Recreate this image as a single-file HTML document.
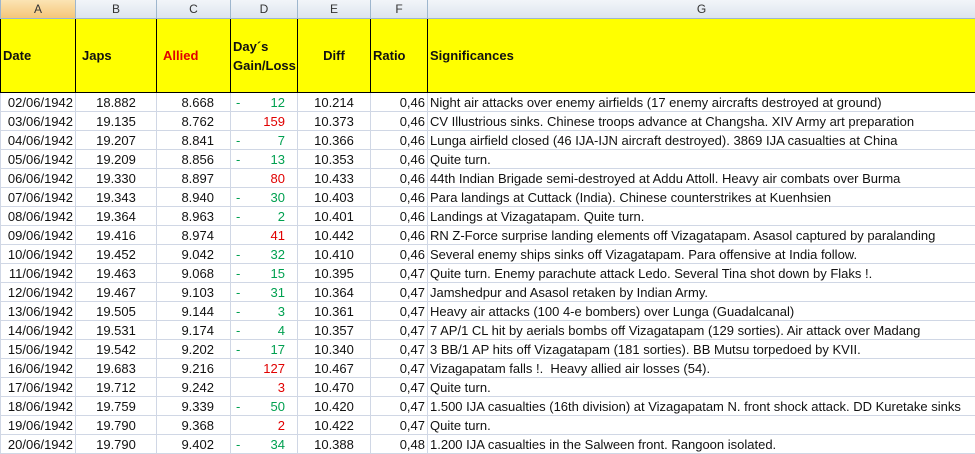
<!DOCTYPE html>
<html><head><style>
body{margin:0;width:975px;height:451px;overflow:hidden;background:#fff;font-family:"Liberation Sans",sans-serif;}
table{border-collapse:collapse;table-layout:fixed;position:absolute;left:0;top:0;width:975px;}
td{padding:0 2px;white-space:nowrap;overflow:hidden;font-size:13px;color:#111;}
tr.h td{height:18px;background:linear-gradient(#f2f5f9,#dde4ee);border:1px solid #9eb6ce;border-top:none;text-align:center;font-size:12px;color:#333;padding:0;}
tr.h td.sel{background:linear-gradient(#fbe4b4,#f5c67a);}
tr.y td{height:73px;background:#ffff00;border:1px solid #000;font-weight:bold;font-size:13px;}
tr.d td{height:17px;border:1px solid #d0d7e5;padding-top:1px;}
.r{text-align:right}.c{text-align:center}
.g{color:#00a050}.rd{color:#e00000}
.dl{float:left;color:#00a050;padding-left:3px}
</style></head><body>
<table>
<colgroup><col style="width:75px"><col style="width:81px"><col style="width:74px"><col style="width:67px"><col style="width:73px"><col style="width:57px"><col style="width:548px"></colgroup>
<tr class="h"><td class="sel">A</td><td>B</td><td>C</td><td>D</td><td>E</td><td>F</td><td>G</td></tr>
<tr class="y"><td>Date</td><td style="padding-left:6px">Japs</td><td style="padding-left:6px;color:#e00000">Allied</td><td style="padding-left:2px;line-height:19px">Day´s<br>Gain/Loss</td><td class="c">Diff</td><td>Ratio</td><td>Significances</td></tr>
<tr class="d"><td class="r">02/06/1942</td><td class="c">18.882</td><td class="r" style="padding-right:16px">8.668</td><td class="r" style="padding-right:12px"><span class="dl">-</span><span class="g">12</span></td><td class="c">10.214</td><td class="r">0,46</td><td>Night air attacks over enemy airfields (17 enemy aircrafts destroyed at ground)</td></tr>
<tr class="d"><td class="r">03/06/1942</td><td class="c">19.135</td><td class="r" style="padding-right:16px">8.762</td><td class="r" style="padding-right:12px"><span class="rd">159</span></td><td class="c">10.373</td><td class="r">0,46</td><td>CV Illustrious sinks. Chinese troops advance at Changsha. XIV Army art preparation</td></tr>
<tr class="d"><td class="r">04/06/1942</td><td class="c">19.207</td><td class="r" style="padding-right:16px">8.841</td><td class="r" style="padding-right:12px"><span class="dl">-</span><span class="g">7</span></td><td class="c">10.366</td><td class="r">0,46</td><td>Lunga airfield closed (46 IJA-IJN aircraft destroyed). 3869 IJA casualties at China</td></tr>
<tr class="d"><td class="r">05/06/1942</td><td class="c">19.209</td><td class="r" style="padding-right:16px">8.856</td><td class="r" style="padding-right:12px"><span class="dl">-</span><span class="g">13</span></td><td class="c">10.353</td><td class="r">0,46</td><td>Quite turn.</td></tr>
<tr class="d"><td class="r">06/06/1942</td><td class="c">19.330</td><td class="r" style="padding-right:16px">8.897</td><td class="r" style="padding-right:12px"><span class="rd">80</span></td><td class="c">10.433</td><td class="r">0,46</td><td>44th Indian Brigade semi-destroyed at Addu Attoll. Heavy air combats over Burma</td></tr>
<tr class="d"><td class="r">07/06/1942</td><td class="c">19.343</td><td class="r" style="padding-right:16px">8.940</td><td class="r" style="padding-right:12px"><span class="dl">-</span><span class="g">30</span></td><td class="c">10.403</td><td class="r">0,46</td><td>Para landings at Cuttack (India). Chinese counterstrikes at Kuenhsien</td></tr>
<tr class="d"><td class="r">08/06/1942</td><td class="c">19.364</td><td class="r" style="padding-right:16px">8.963</td><td class="r" style="padding-right:12px"><span class="dl">-</span><span class="g">2</span></td><td class="c">10.401</td><td class="r">0,46</td><td>Landings at Vizagatapam. Quite turn.</td></tr>
<tr class="d"><td class="r">09/06/1942</td><td class="c">19.416</td><td class="r" style="padding-right:16px">8.974</td><td class="r" style="padding-right:12px"><span class="rd">41</span></td><td class="c">10.442</td><td class="r">0,46</td><td>RN Z-Force surprise landing elements off Vizagatapam. Asasol captured by paralanding</td></tr>
<tr class="d"><td class="r">10/06/1942</td><td class="c">19.452</td><td class="r" style="padding-right:16px">9.042</td><td class="r" style="padding-right:12px"><span class="dl">-</span><span class="g">32</span></td><td class="c">10.410</td><td class="r">0,46</td><td>Several enemy ships sinks off Vizagatapam. Para offensive at India follow.</td></tr>
<tr class="d"><td class="r">11/06/1942</td><td class="c">19.463</td><td class="r" style="padding-right:16px">9.068</td><td class="r" style="padding-right:12px"><span class="dl">-</span><span class="g">15</span></td><td class="c">10.395</td><td class="r">0,47</td><td>Quite turn. Enemy parachute attack Ledo. Several Tina shot down by Flaks !.</td></tr>
<tr class="d"><td class="r">12/06/1942</td><td class="c">19.467</td><td class="r" style="padding-right:16px">9.103</td><td class="r" style="padding-right:12px"><span class="dl">-</span><span class="g">31</span></td><td class="c">10.364</td><td class="r">0,47</td><td>Jamshedpur and Asasol retaken by Indian Army.</td></tr>
<tr class="d"><td class="r">13/06/1942</td><td class="c">19.505</td><td class="r" style="padding-right:16px">9.144</td><td class="r" style="padding-right:12px"><span class="dl">-</span><span class="g">3</span></td><td class="c">10.361</td><td class="r">0,47</td><td>Heavy air attacks (100 4-e bombers) over Lunga (Guadalcanal)</td></tr>
<tr class="d"><td class="r">14/06/1942</td><td class="c">19.531</td><td class="r" style="padding-right:16px">9.174</td><td class="r" style="padding-right:12px"><span class="dl">-</span><span class="g">4</span></td><td class="c">10.357</td><td class="r">0,47</td><td>7 AP/1 CL hit by aerials bombs off Vizagatapam (129 sorties). Air attack over Madang</td></tr>
<tr class="d"><td class="r">15/06/1942</td><td class="c">19.542</td><td class="r" style="padding-right:16px">9.202</td><td class="r" style="padding-right:12px"><span class="dl">-</span><span class="g">17</span></td><td class="c">10.340</td><td class="r">0,47</td><td>3 BB/1 AP hits off Vizagatapam (181 sorties). BB Mutsu torpedoed by KVII.</td></tr>
<tr class="d"><td class="r">16/06/1942</td><td class="c">19.683</td><td class="r" style="padding-right:16px">9.216</td><td class="r" style="padding-right:12px"><span class="rd">127</span></td><td class="c">10.467</td><td class="r">0,47</td><td>Vizagapatam falls !.&nbsp; Heavy allied air losses (54).</td></tr>
<tr class="d"><td class="r">17/06/1942</td><td class="c">19.712</td><td class="r" style="padding-right:16px">9.242</td><td class="r" style="padding-right:12px"><span class="rd">3</span></td><td class="c">10.470</td><td class="r">0,47</td><td>Quite turn.</td></tr>
<tr class="d"><td class="r">18/06/1942</td><td class="c">19.759</td><td class="r" style="padding-right:16px">9.339</td><td class="r" style="padding-right:12px"><span class="dl">-</span><span class="g">50</span></td><td class="c">10.420</td><td class="r">0,47</td><td>1.500 IJA casualties (16th division) at Vizagapatam N. front shock attack. DD Kuretake sinks</td></tr>
<tr class="d"><td class="r">19/06/1942</td><td class="c">19.790</td><td class="r" style="padding-right:16px">9.368</td><td class="r" style="padding-right:12px"><span class="rd">2</span></td><td class="c">10.422</td><td class="r">0,47</td><td>Quite turn.</td></tr>
<tr class="d"><td class="r">20/06/1942</td><td class="c">19.790</td><td class="r" style="padding-right:16px">9.402</td><td class="r" style="padding-right:12px"><span class="dl">-</span><span class="g">34</span></td><td class="c">10.388</td><td class="r">0,48</td><td>1.200 IJA casualties in the Salween front. Rangoon isolated.</td></tr>
</table>
</body></html>
